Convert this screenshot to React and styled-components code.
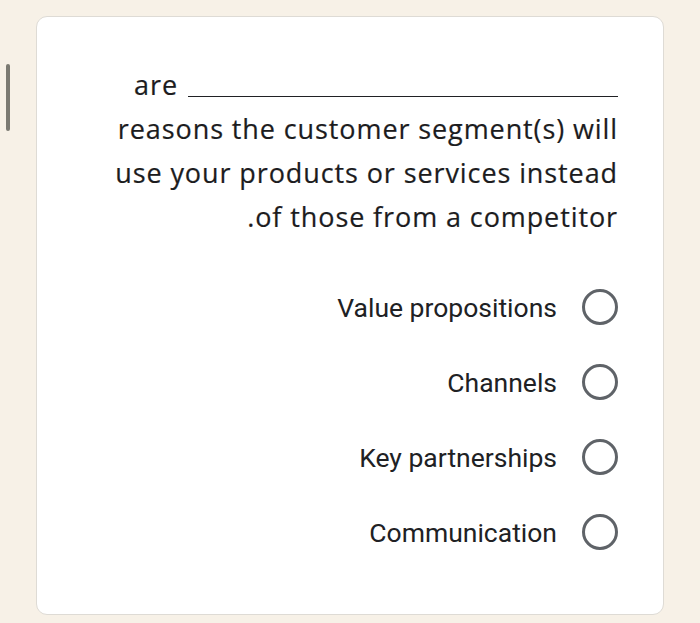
import React from 'react';
import styled, { createGlobalStyle } from 'styled-components';

const GlobalStyle = createGlobalStyle`
    html, body {
        margin: 0;
        padding: 0;
        background: #f7f1e7;
    }
`;

const options = ['Value propositions', 'Channels', 'Key partnerships', 'Communication'];

export default function App() {
    return (
        <>
            <GlobalStyle />
            <Page>
                <SideBar />
                <Card>
                    <Question>
                        <FirstLine>
                            <span>are</span>
                            <Blank />
                        </FirstLine>
                        <Line>reasons the customer segment(s) will</Line>
                        <Line>use your products or services instead</Line>
                        <Line>.of those from a competitor</Line>
                    </Question>
                    <Options>
                        {options.map(o => (
                            <Option key={o}>
                                <Label>{o}</Label>
                                <Radio />
                            </Option>
                        ))}
                    </Options>
                </Card>
            </Page>
        </>
    );
}

const Page = styled.div`
    width: 700px;
    height: 623px;
    box-sizing: border-box;
    padding: 16px 0 0 6px;
    display: flex;
    align-items: flex-start;
    gap: 26px;
`;

const SideBar = styled.div`
    width: 4px;
    height: 67px;
    margin-top: 48px;
    border-radius: 2px;
    background: #7b7a72;
`;

const Card = styled.div`
    width: 628px;
    height: 599px;
    box-sizing: border-box;
    background: #ffffff;
    border: 1px solid #dedbd5;
    border-radius: 11px;
    padding: 46px 45px 0 0;
    display: flex;
    flex-direction: column;
    align-items: flex-end;
`;

const Question = styled.div`
    font-family: 'Open Sans', sans-serif;
    font-size: 27px;
    letter-spacing: 0.9px;
    line-height: 44px;
    color: #1c1c1e;
    text-align: right;
    -webkit-text-stroke: 0.2px #1c1c1e;
`;

const FirstLine = styled.div`
    display: flex;
    justify-content: flex-end;
    align-items: baseline;
    gap: 10px;
`;

const Blank = styled.span`
    display: inline-block;
    width: 430px;
    border-bottom: 1.5px solid #202124;
    transform: translateY(2px);
`;

const Line = styled.div``;

const Options = styled.div`
    margin-top: 50px;
    display: flex;
    flex-direction: column;
    align-items: flex-end;
    gap: 39px;
`;

const Option = styled.div`
    display: flex;
    align-items: center;
    gap: 25px;
    height: 36px;
`;

const Label = styled.span`
    font-family: Roboto, sans-serif;
    font-size: 26.5px;
    color: #202124;
`;

const Radio = styled.span`
    width: 36px;
    height: 36px;
    box-sizing: border-box;
    border: 3.5px solid #5f6368;
    border-radius: 50%;
`;
